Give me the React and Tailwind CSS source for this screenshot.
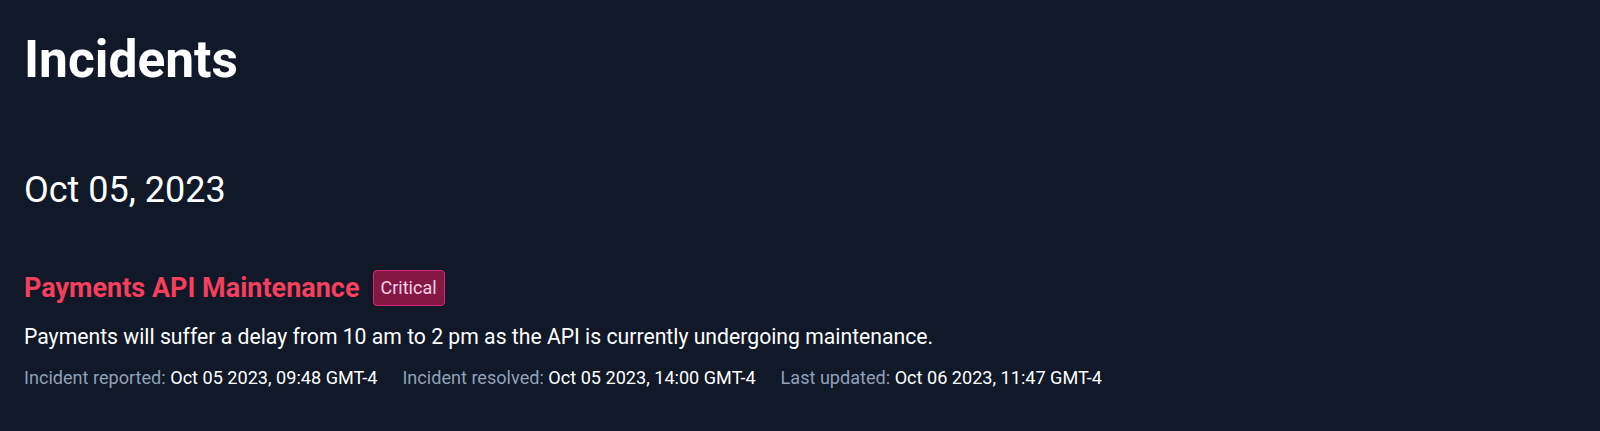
import React from "react";

const incidents = [
  {
    title: "Payments API Maintenance",
    severity: "Critical",
    body: "Payments will suffer a delay from 10 am to 2 pm as the API is currently undergoing maintenance.",
    reported: "Oct 05 2023, 09:48 GMT-4",
    resolved: "Oct 05 2023, 14:00 GMT-4",
    updated: "Oct 06 2023, 11:47 GMT-4",
  },
];

function Meta({ label, value }) {
  return (
    <span>
      <span className="text-slate-400">{label}:</span>{" "}
      <span className="text-white">{value}</span>
    </span>
  );
}

export default function App() {
  return (
    <div
      className="min-h-[431px] bg-[#111827] px-6 pt-[22px] text-white"
      style={{ fontFamily: "Roboto, 'Noto Sans', sans-serif" }}
    >
      <h1 className="text-[51.5px] font-bold leading-[76px]">Incidents</h1>

      <h2 className="mt-[72px] text-4xl leading-[40px]">Oct 05, 2023</h2>

      {incidents.map((inc) => (
        <div key={inc.title} className="mt-[60px]">
          <div className="flex items-center gap-[13px]">
            <h3 className="text-[27px] font-bold leading-8 text-[#f43f5e]">{inc.title}</h3>
            <span className="rounded border border-[#db2777] bg-[#831843] px-[7px] py-[3px] text-lg leading-7 text-[#fbcfe8]">
              {inc.severity}
            </span>
          </div>
          <p className="mt-[17px] text-[21.2px] leading-7">{inc.body}</p>
          <div className="mt-[13px] flex gap-[25px] text-[18.1px] leading-7">
            <Meta label="Incident reported" value={inc.reported} />
            <Meta label="Incident resolved" value={inc.resolved} />
            <Meta label="Last updated" value={inc.updated} />
          </div>
        </div>
      ))}
    </div>
  );
}
